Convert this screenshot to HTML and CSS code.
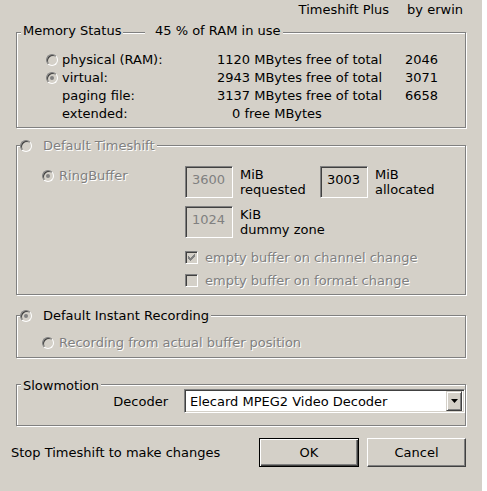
FILE: index.html
```html
<!DOCTYPE html>
<html lang="en">
<head>
    <meta charset="UTF-8">
    <title>Timeshift Plus</title>
    <link rel="stylesheet" href="styles.css">
</head>
<body>

<div class="dialog">
    <div class="title-row">
        <span class="title">Timeshift Plus</span>
        <span>by erwin</span>
    </div>

    <!-- memory -->
    <div class="group group-memory">
        <div class="legend legend-memory">Memory Status</div>
        <div class="legend legend-usage">45 % of RAM in use</div>

        <div class="mem-grid">
            <div class="mem-label"><span class="radio"></span>physical (RAM):</div>
            <div>1120 MBytes free of total</div>
            <div>2046</div>

            <div class="mem-label"><span class="radio on"></span>virtual:</div>
            <div>2943 MBytes free of total</div>
            <div>3071</div>

            <div class="mem-label no-radio">paging file:</div>
            <div>3137 MBytes free of total</div>
            <div>6658</div>

            <div class="mem-label no-radio">extended:</div>
            <div class="extended">0 free MBytes</div>
            <div></div>
        </div>
    </div>

    <!-- timeshift -->
    <div class="group group-timeshift">
        <div class="legend legend-option disabled"><span class="radio legend-radio"></span>Default Timeshift</div>

        <div class="ts-body">
            <div class="ts-left">
                <div class="option disabled"><span class="radio on"></span>RingBuffer</div>
            </div>
            <div class="ts-right">
                <div class="edit-row">
                    <div class="edit disabled">3600</div>
                    <div class="edit-label">MiB<br>requested</div>
                    <div class="edit">3003</div>
                    <div class="edit-label">MiB<br>allocated</div>
                </div>
                <div class="edit-row second">
                    <div class="edit disabled">1024</div>
                    <div class="edit-label">KiB<br>dummy zone</div>
                </div>
                <div class="check-row first disabled">
                    <span class="checkbox">
                        <svg width="7" height="7" viewBox="0 0 7 7"><path d="M0 2h1v1h1v1h1v-1h1v-1h1v-1h1v-1h1v3h-1v1h-1v1h-1v1h-1v1h-1v-1h-1v-1h-1v-1h-1z" fill="#808080"/></svg>
                    </span>
                    empty buffer on channel change
                </div>
                <div class="check-row disabled">
                    <span class="checkbox"></span>
                    empty buffer on format change
                </div>
            </div>
        </div>
    </div>

    <!-- recording -->
    <div class="group group-recording">
        <div class="legend legend-option"><span class="radio on legend-radio"></span>Default Instant Recording</div>
        <div class="option disabled"><span class="radio"></span>Recording from actual buffer position</div>
    </div>

    <!-- slowmotion -->
    <div class="group group-slow">
        <div class="legend legend-slow">Slowmotion</div>
        <div class="decoder-row">
            <span class="decoder-label">Decoder</span>
            <div class="select">
                <span class="select-text">Elecard MPEG2 Video Decoder</span>
                <span class="select-btn">
                    <svg width="7" height="4" viewBox="0 0 7 4"><path d="M0 0h7L3.5 4z" fill="#000"/></svg>
                </span>
            </div>
        </div>
    </div>

    <div class="footer">
        <span>Stop Timeshift to make changes</span>
        <button class="btn btn-default">OK</button>
        <button class="btn">Cancel</button>
    </div>
</div>

</body>
</html>
```

FILE: styles.css
```css
body {
    margin: 0;
    background: #fff;
    font-family: "DejaVu Sans", sans-serif;
    font-size: 13px;
    line-height: 15px;
    color: #000;
}

.dialog {
    width: 482px;
    height: 491px;
    background: #d4d0c8;
    display: flex;
    flex-direction: column;
}

.title-row {
    height: 32px;
    box-sizing: border-box;
    padding: 2px 19px 0 0;
    display: flex;
    justify-content: flex-end;
}

.title {
    margin-right: 18px;
}

/* etched group frame */
.group {
    position: relative;
    width: 450px;
    margin-left: 16px;
    box-sizing: border-box;
    border: 1px solid #808080;
    box-shadow: inset 1px 1px 0 #fff, 1px 1px 0 #fff;
}

.legend {
    position: absolute;
    background: #d4d0c8;
    padding: 0 2px;
    display: flex;
    align-items: center;
    white-space: nowrap;
}

.disabled {
    color: #808080;
    text-shadow: 1px 1px 0 #fff;
}

/* radio + checkbox */
.radio {
    position: relative;
    display: inline-block;
    flex: none;
    width: 12px;
    height: 12px;
    box-sizing: border-box;
    border-radius: 50%;
    border: 1px solid;
    border-color: #808080 #fff #fff #808080;
    box-shadow: inset 1px 1px 0 #404040, inset -1px -1px 0 #d4d0c8;
    background: #d4d0c8;
    margin-right: 4px;
}

.radio.on::after {
    content: "";
    position: absolute;
    left: 3px;
    top: 3px;
    width: 4px;
    height: 4px;
    border-radius: 50%;
    background: #808080;
}

.checkbox {
    display: inline-flex;
    align-items: center;
    justify-content: center;
    flex: none;
    width: 13px;
    height: 13px;
    box-sizing: border-box;
    border: 1px solid;
    border-color: #808080 #fff #fff #808080;
    box-shadow: inset 1px 1px 0 #404040, inset -1px -1px 0 #d4d0c8;
    background: #d4d0c8;
    margin-right: 7px;
}

/* memory status */
.group-memory {
    height: 96px;
    padding: 18px 0 0 29px;
}

.legend-memory {
    left: 4px;
    top: -10px;
}

.legend-usage {
    left: 128px;
    top: -10px;
    padding-left: 10px;
}

.mem-grid {
    display: grid;
    grid-template-columns: 171px 188px auto;
    line-height: 18px;
}

.mem-label {
    display: flex;
    align-items: center;
}

.mem-label.no-radio {
    padding-left: 16px;
}

.extended {
    padding-left: 15px;
}

/* timeshift */
.group-timeshift {
    height: 150px;
    margin-top: 17px;
    padding: 20px 0 0 25px;
}

.legend-option {
    left: 3px;
    top: -8px;
    padding: 0 2px 0 0;
}

.legend-radio {
    margin-right: 11px;
}

.ts-body {
    display: flex;
}

.ts-left {
    width: 143px;
    padding-top: 2px;
}

.option {
    display: flex;
    align-items: center;
}

.option .radio {
    margin-right: 5px;
}

.edit-row {
    display: flex;
}

.edit-row.second {
    margin-top: 8px;
}

.edit {
    width: 48px;
    height: 32px;
    box-sizing: border-box;
    border: 1px solid;
    border-color: #808080 #fff #fff #808080;
    box-shadow: inset 1px 1px 0 #404040, inset -1px -1px 0 #d4d0c8;
    padding: 5px 0 0 6px;
    text-shadow: none;
}

.edit.disabled {
    color: #808080;
}

.edit-label {
    width: 87px;
    box-sizing: border-box;
    padding: 1px 0 0 7px;
    white-space: nowrap;
}

.check-row {
    display: flex;
    align-items: center;
    height: 23px;
    white-space: nowrap;
}

.check-row.first {
    margin-top: 8px;
}

/* recording */
.group-recording {
    height: 43px;
    margin-top: 20px;
    padding: 19px 0 0 25px;
}

/* slowmotion */
.group-slow {
    height: 42px;
    margin-top: 26px;
    padding-top: 4px;
}

.legend-slow {
    left: 4px;
    top: -7px;
}

.decoder-row {
    display: flex;
    align-items: center;
}

.decoder-label {
    width: 151px;
    text-align: right;
    margin-right: 16px;
}

.select {
    width: 281px;
    height: 24px;
    box-sizing: border-box;
    border: 1px solid;
    border-color: #808080 #fff #fff #808080;
    box-shadow: inset 1px 1px 0 #404040, inset -1px -1px 0 #d4d0c8;
    background: #fff;
    display: flex;
    align-items: center;
    padding: 2px;
}

.select-text {
    flex: 1;
    padding-left: 3px;
}

.select-btn {
    width: 16px;
    height: 20px;
    box-sizing: border-box;
    background: #d4d0c8;
    border: 1px solid;
    border-color: #d4d0c8 #404040 #404040 #d4d0c8;
    box-shadow: inset 1px 1px 0 #fff, inset -1px -1px 0 #808080;
    display: flex;
    align-items: center;
    justify-content: center;
}

/* footer */
.footer {
    margin-top: 12px;
    height: 29px;
    display: flex;
    align-items: center;
    padding: 0 16px 0 11px;
}

.btn {
    width: 99px;
    height: 29px;
    font: inherit;
    color: #000;
    background: #d4d0c8;
    border: 1px solid;
    border-color: #fff #404040 #404040 #fff;
    box-shadow: inset -1px -1px 0 #808080;
    padding: 0;
    margin-left: 8px;
}

.btn-default {
    width: 100px;
    margin-left: auto;
    border-color: #000;
    box-shadow: inset 1px 1px 0 #fff, inset -1px -1px 0 #404040, inset -2px -2px 0 #808080;
}
```
